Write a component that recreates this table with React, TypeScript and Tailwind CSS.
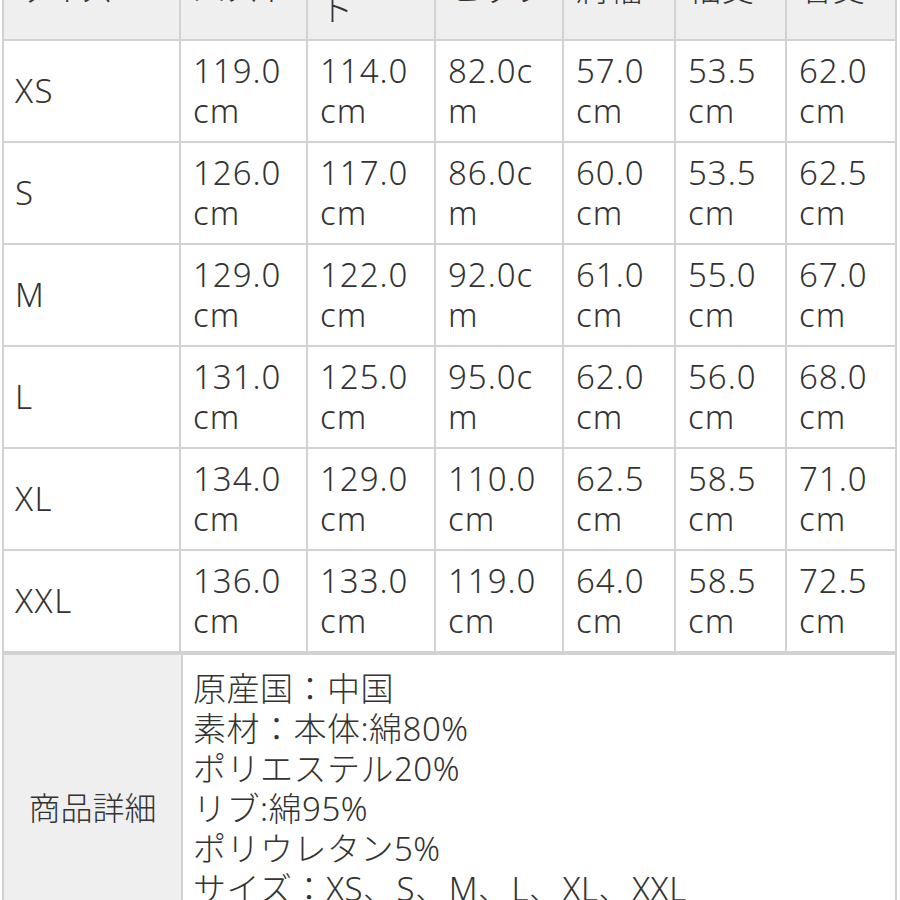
import React from "react";

const headers: string[][] = [
  ["サイズ"],
  ["バスト"],
  ["ウエス", "ト"],
  ["ヒップ"],
  ["肩幅"],
  ["袖丈"],
  ["着丈"],
];

const sizes: { size: string; values: string[] }[] = [
  { size: "XS", values: ["119.0", "114.0", "82.0", "57.0", "53.5", "62.0"] },
  { size: "S", values: ["126.0", "117.0", "86.0", "60.0", "53.5", "62.5"] },
  { size: "M", values: ["129.0", "122.0", "92.0", "61.0", "55.0", "67.0"] },
  { size: "L", values: ["131.0", "125.0", "95.0", "62.0", "56.0", "68.0"] },
  { size: "XL", values: ["134.0", "129.0", "110.0", "62.5", "58.5", "71.0"] },
  { size: "XXL", values: ["136.0", "133.0", "119.0", "64.0", "58.5", "72.5"] },
];

const details = [
  "原産国：中国",
  "素材：本体:綿80%",
  "ポリエステル20%",
  "リブ:綿95%",
  "ポリウレタン5%",
  "サイズ：XS、S、M、L、XL、XXL",
  "カラー：ブラック",
];

// the 3rd value column is wide enough for "82.0c" but not "82.0cm"
const splitValue = (v: string, col: number) =>
  col === 2 && v.length === 4 ? [v + "c", "m"] : [v, "cm"];

const App = () => {
  return (
    <div className="w-[900px] h-[900px] overflow-hidden bg-white font-['Noto_Sans','Noto_Sans_CJK_JP',sans-serif] font-light text-[33px] leading-[40px] text-[#333333]">
      <div className="pl-[2px] mt-[-63px]">
        <div className="grid w-[895px] grid-cols-[175px_125px_126px_126px_110px_109px_108px] gap-[2px] border-2 border-[#d2d2d2] bg-[#d2d2d2]">
          {headers.map((lines, i) => (
            <div
              key={i}
              className="flex flex-col justify-center bg-[#efefef] py-[10px] pl-[12px] min-h-[100px]"
            >
              {lines.map((l, j) => (
                <span key={j}>{l}</span>
              ))}
            </div>
          ))}
          {sizes.map((row) => (
            <React.Fragment key={row.size}>
              <div className="flex items-center bg-white pl-[11px] h-[100px] tracking-[1.5px]">
                {row.size}
              </div>
              {row.values.map((v, c) => (
                <div
                  key={c}
                  className="flex flex-col bg-white py-[10px] pl-[12px] h-[100px] tracking-[1px] whitespace-nowrap"
                >
                  {splitValue(v, c).map((l, j) => (
                    <span key={j}>{l}</span>
                  ))}
                </div>
              ))}
            </React.Fragment>
          ))}
        </div>
        <div className="grid w-[895px] grid-cols-[177px_1fr] gap-[2px] border-2 border-[#d2d2d2] bg-[#d2d2d2]">
          <div className="flex items-center justify-center bg-[#efefef] text-[32px]">商品詳細</div>
          <div className="flex flex-col bg-white pt-[14px] pb-[12px] pl-[10px] tracking-[0.5px]">
            {details.map((d) => (
              <span key={d}>{d}</span>
            ))}
          </div>
        </div>
      </div>
    </div>
  );
};

export default App;
